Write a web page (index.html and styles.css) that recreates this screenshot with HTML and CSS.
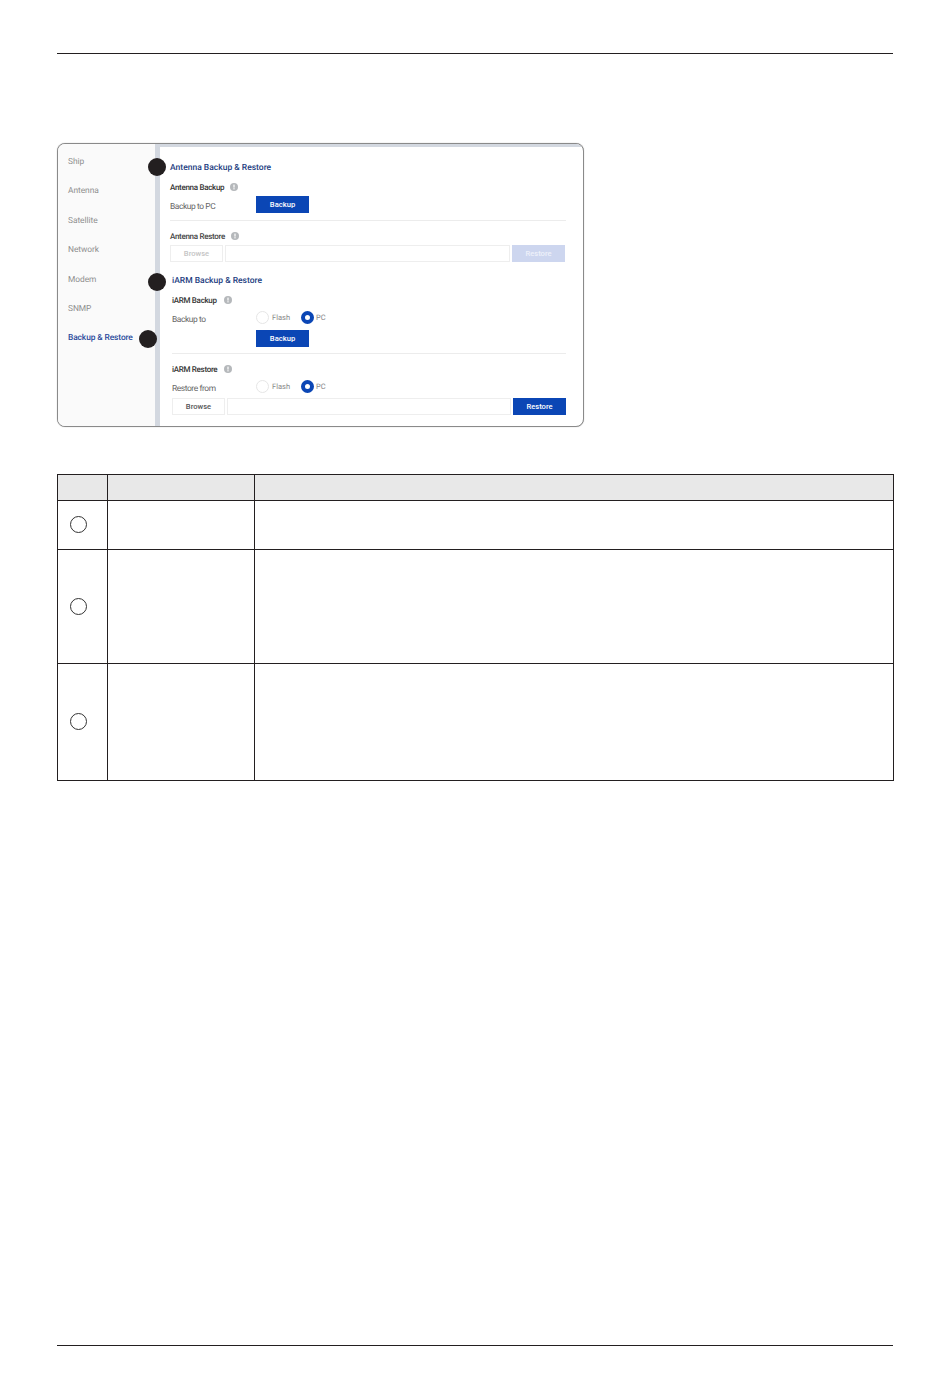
FILE: index.html
```html
<!DOCTYPE html>
<html lang="en">
<head>
    <meta charset="UTF-8" />
    <meta name="viewport" content="width=device-width, initial-scale=1" />
    <title>Backup &amp; Restore</title>
    <link rel="stylesheet" href="styles.css">
</head>
<body>
    <div class="page">
        <div class="page-rule"></div>

        <div class="shot">
            <div class="sidebar">
                <div class="nav-item">Ship</div>
                <div class="nav-item">Antenna</div>
                <div class="nav-item">Satellite</div>
                <div class="nav-item">Network</div>
                <div class="nav-item">Modem</div>
                <div class="nav-item">SNMP</div>
                <div class="nav-item active">Backup &amp; Restore</div>
            </div>
            <div class="main">
                <div class="section antenna">
                    <h2>Antenna Backup &amp; Restore</h2>
                    <div class="sub-title">
                        Antenna Backup
                        <svg class="info" viewBox="0 0 8 8"><circle cx="4" cy="4" r="4" /><rect x="3.4" y="1.6" width="1.2" height="3" /><rect x="3.4" y="5.2" width="1.2" height="1.2" /></svg>
                    </div>
                    <div class="row backup-pc">
                        <span class="row-label">Backup to PC</span>
                        <button class="btn primary">Backup</button>
                    </div>
                    <div class="divider"></div>
                    <div class="sub-title faint">
                        Antenna Restore
                        <svg class="info" viewBox="0 0 8 8"><circle cx="4" cy="4" r="4" /><rect x="3.4" y="1.6" width="1.2" height="3" /><rect x="3.4" y="5.2" width="1.2" height="1.2" /></svg>
                    </div>
                    <div class="file-row disabled">
                        <button class="btn plain">Browse</button>
                        <div class="file-input"></div>
                        <button class="btn primary">Restore</button>
                    </div>
                </div>

                <div class="section iarm">
                    <h2>iARM Backup &amp; Restore</h2>
                    <div class="sub-title">
                        iARM Backup
                        <svg class="info" viewBox="0 0 8 8"><circle cx="4" cy="4" r="4" /><rect x="3.4" y="1.6" width="1.2" height="3" /><rect x="3.4" y="5.2" width="1.2" height="1.2" /></svg>
                    </div>
                    <div class="row radio-row">
                        <span class="row-label">Backup to</span>
                        <span class="radio"></span><span class="radio-text flash">Flash</span>
                        <span class="radio on"></span><span class="radio-text">PC</span>
                    </div>
                    <button class="btn primary iarm-backup">Backup</button>
                    <div class="divider"></div>
                    <div class="sub-title">
                        iARM Restore
                        <svg class="info" viewBox="0 0 8 8"><circle cx="4" cy="4" r="4" /><rect x="3.4" y="1.6" width="1.2" height="3" /><rect x="3.4" y="5.2" width="1.2" height="1.2" /></svg>
                    </div>
                    <div class="row radio-row">
                        <span class="row-label">Restore from</span>
                        <span class="radio"></span><span class="radio-text flash">Flash</span>
                        <span class="radio on"></span><span class="radio-text">PC</span>
                    </div>
                    <div class="file-row">
                        <button class="btn plain">Browse</button>
                        <div class="file-input"></div>
                        <button class="btn primary">Restore</button>
                    </div>
                </div>
            </div>
            <span class="dot dot-1"></span>
            <span class="dot dot-2"></span>
            <span class="dot dot-3"></span>
        </div>

        <table class="spec-table">
            <colgroup>
                <col class="col-num" />
                <col class="col-name" />
                <col />
            </colgroup>
            <tr class="head"><th></th><th></th><th></th></tr>
            <tr class="row-1"><td><span class="circle"></span></td><td></td><td></td></tr>
            <tr class="row-2"><td><span class="circle"></span></td><td></td><td></td></tr>
            <tr class="row-3"><td><span class="circle"></span></td><td></td><td></td></tr>
        </table>

        <div class="page-rule bottom"></div>
    </div>
</body>
</html>
```

FILE: styles.css
```css
body {
    margin: 0;
    background: #fff;
    font-family: 'Roboto', 'Liberation Sans', sans-serif;
    text-rendering: geometricPrecision;
}
.page {
    width: 837px;
    height: 1293px;
    padding: 53px 56px 32px 57px;
    display: flex;
    flex-direction: column;
}
.page-rule {
    width: 836px;
    height: 1px;
    background: #231f20;
}
.page-rule.bottom {
    margin-top: auto;
}

/* screenshot frame */
.shot {
    position: relative;
    display: flex;
    width: 525px;
    height: 282px;
    margin-top: 89px;
    margin-bottom: 1px;
    border: 1px solid #8a8a8a;
    border-radius: 8px;
    overflow: hidden;
    background: #fff;
    box-shadow: 0 0 1px rgba(0, 0, 0, 0.35);
}
.sidebar {
    flex: none;
    width: 102px;
    padding: 11px 0 0 10px;
    box-sizing: border-box;
    background: #fafafa;
    border-right: 5px solid #d3d8e0;
}
.nav-item {
    height: 29.4px;
    line-height: 14px;
    font-size: 8.4px;
    letter-spacing: -0.05px;
    color: #8f8f8f;
}
.nav-item.active {
    color: #2a4a9c;
    font-weight: 500;
    letter-spacing: -0.1px;
}
.main {
    flex: 1;
    border-top: 3px solid #d3d8e0;
    padding-right: 17px;
    min-width: 0;
}
.section h2 {
    margin: 0;
    height: 14px;
    line-height: 14px;
    font-size: 8.5px;
    font-weight: 500;
    color: #24407f;
}
.section.iarm h2 {
    line-height: 16px;
}
.section.antenna {
    padding: 14px 0 0 10px;
}
.section.iarm {
    padding: 11px 0 0 12px;
}
.sub-title {
    display: flex;
    align-items: center;
    gap: 6px;
    height: 14px;
    margin-top: 6px;
    font-size: 8px;
    font-weight: 500;
    letter-spacing: -0.3px;
    color: #333;
}
.section.antenna h2 + .sub-title {
    margin-top: 5px;
}
.section.iarm .sub-title {
    gap: 7px;
}
.sub-title.faint {
    color: #444;
}
.info {
    width: 8px;
    height: 8px;
    fill: #b5b8bb;
}
.info rect {
    fill: #fff;
}
.row {
    display: flex;
    align-items: center;
}
.row-label {
    width: 86px;
    flex: none;
    padding-top: 4px;
    font-size: 8.4px;
    letter-spacing: -0.4px;
    color: #666;
}
.section.iarm .row-label {
    width: 84px;
    padding-top: 6px;
}
.backup-pc {
    height: 17px;
    margin-top: 2px;
}
.radio-row {
    height: 14px;
    margin-top: 3px;
}
.radio {
    width: 11px;
    height: 11px;
    border: 1px solid #e6e6e6;
    border-radius: 50%;
    flex: none;
}
.radio.on {
    width: 5px;
    height: 5px;
    border: 4px solid #0b46b5;
}
.radio-text {
    margin-left: 3px;
    font-size: 7.5px;
    color: #888;
}
.radio.on + .radio-text {
    margin-left: 2px;
}
.radio-text.flash {
    width: 29px;
}
.btn {
    height: 17px;
    width: 53px;
    flex: none;
    padding: 0;
    border: none;
    font-family: inherit;
    font-size: 7.6px;
    font-weight: 500;
}
.btn.primary {
    background: #0b46b5;
    color: #fff;
}
.btn.plain {
    background: #fff;
    border: 1px solid #eee;
    color: #555;
}
.iarm-backup {
    display: block;
    margin: 6px 0 0 84px;
}
.divider {
    height: 1px;
    background: #ececec;
    margin-top: 7px;
}
.iarm .divider {
    margin-top: 6px;
}
.antenna .divider + .sub-title,
.iarm .divider + .sub-title {
    margin-top: 8px;
}
.file-row {
    display: flex;
    height: 17px;
    gap: 2px;
    margin-top: 2px;
}
.file-input {
    flex: 1;
    border: 1px solid #eee;
}
.file-row.disabled {
    margin-right: 1px;
}
.file-row.disabled .btn.plain {
    color: #c4c4c4;
}
.file-row.disabled .btn.primary {
    background: #cdd6ef;
    color: #eef1fa;
}
.iarm .radio-row + .file-row {
    margin-top: 5px;
}

/* callout dots over the screenshot */
.dot {
    position: absolute;
    width: 18px;
    height: 18px;
    border-radius: 50%;
    background: #231f20;
}
.dot-1 { left: 90px; top: 14px; }
.dot-2 { left: 90px; top: 129px; }
.dot-3 { left: 81px; top: 186px; }

/* description table */
.spec-table {
    width: 837px;
    margin-top: 46px;
    border-collapse: collapse;
    table-layout: fixed;
}
.spec-table th,
.spec-table td {
    border: 1px solid #231f20;
    padding: 0;
    text-align: center;
}
.spec-table td:first-child {
    padding: 0 9px 1px 0;
}
.spec-table th {
    background: #e8e8e8;
}
.col-num { width: 50px; }
.col-name { width: 147px; }
.head { height: 26px; }
.row-1 { height: 49px; }
.row-2 { height: 114px; }
.row-3 { height: 117px; }
.circle {
    display: block;
    width: 15px;
    height: 15px;
    margin: 0 auto;
    border: 1px solid #333;
    border-radius: 50%;
}
```
